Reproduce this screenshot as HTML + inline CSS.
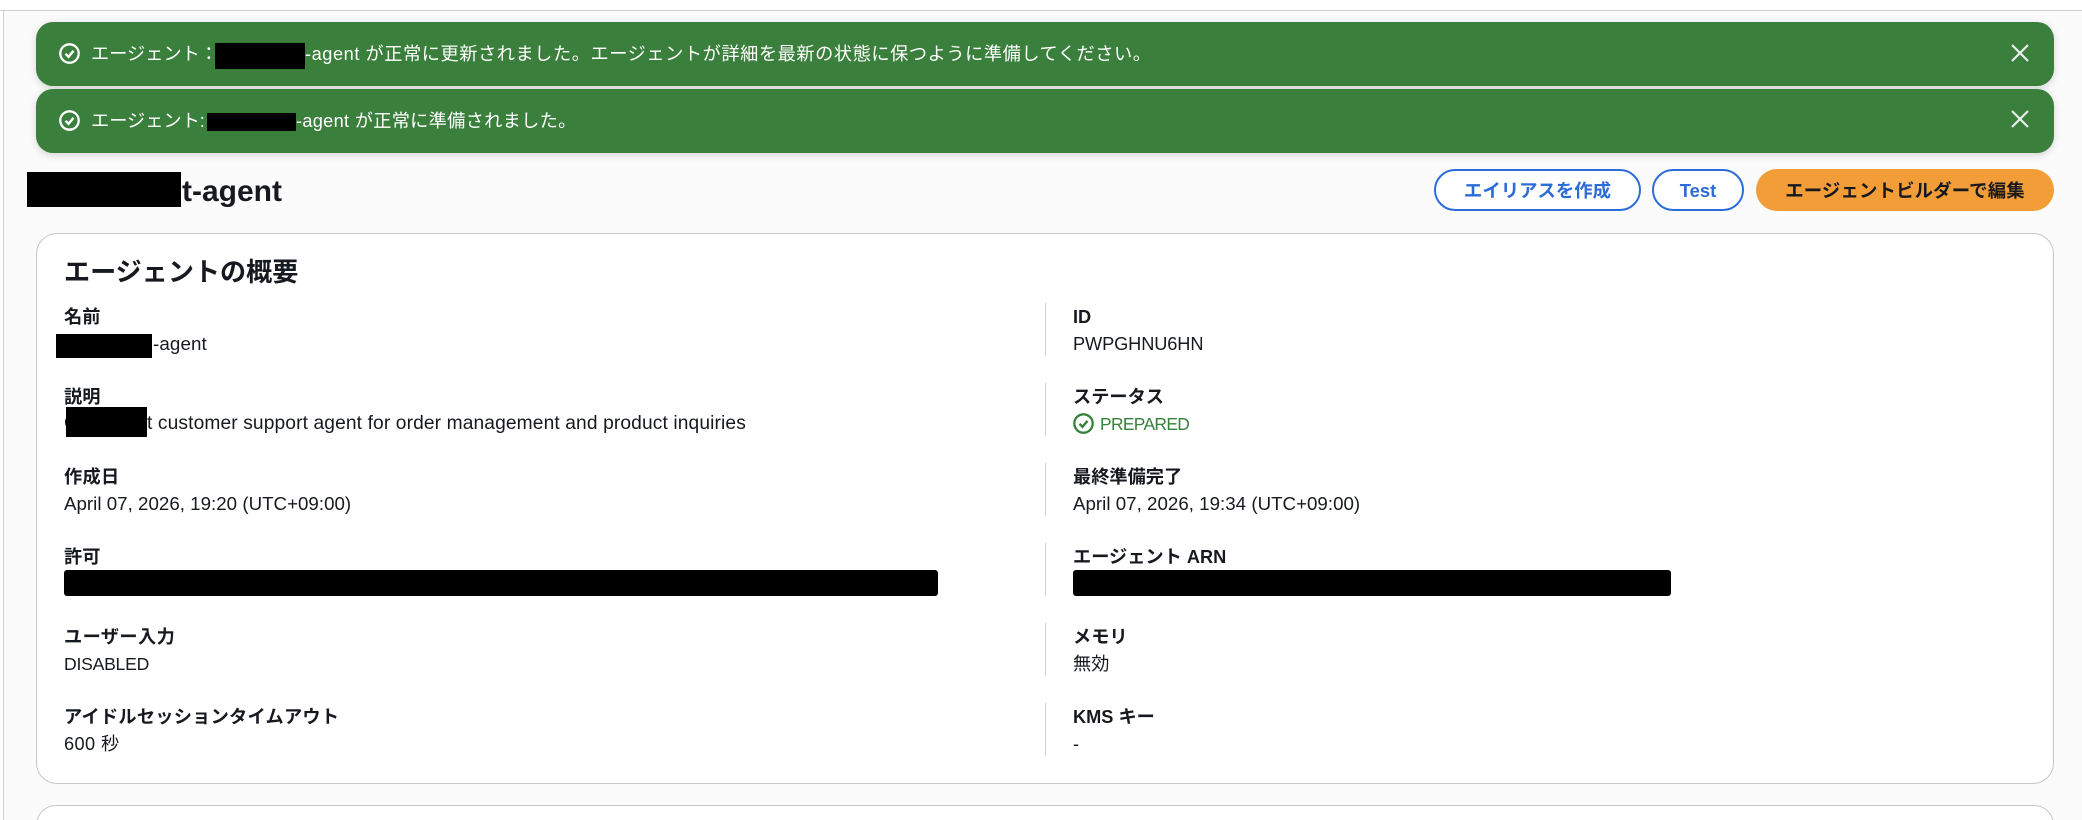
<!DOCTYPE html>
<html lang="ja"><head><meta charset="utf-8"><title>Agent</title>
<style>
html,body{margin:0;padding:0;width:2082px;height:820px;overflow:hidden;background:#fff}
body{position:relative;font-family:"Liberation Sans","Noto Sans CJK JP",sans-serif;color:#16191f}
div,span,h1,h2,svg{position:absolute;margin:0}
.t{white-space:nowrap;line-height:30px;font-size:18.2px;font-weight:400}
.l{font-weight:700}
.k{background:#000}
.fl{left:36px;width:2018px;height:64px;background:#3a7f3c;border-radius:17px;box-shadow:0 2px 8px rgba(0,0,0,.16)}
.w{color:#fff}
.b{box-sizing:border-box;top:169px;height:42px;border-radius:21px;text-align:center;line-height:40px;font-size:18.4px;font-weight:700;white-space:nowrap}
.o{border:2px solid #2c6cd8;background:#fff;color:#2c6cd8}
.d{left:1045px;width:1px;height:53px;background:#d3d3d6}
.card{left:36px;width:2018px;box-sizing:border-box;border:1px solid #c6c6cd;border-radius:21px;background:#fff}
</style></head><body>
<div style="left:0;top:0;width:2082px;height:10px;background:#fff;border-bottom:1px solid #d0d0d0"></div>
<div style="left:3px;top:11px;width:2079px;height:809px;background:#fbfbfb;border-left:1px solid #d0d0d0"></div>

<div class="fl" style="top:22px"></div>
<div class="fl" style="top:89px"></div>

<svg style="left:59px;top:43px" width="21" height="21" viewBox="0 0 21 21" fill="none" stroke="#fff" stroke-width="2.3"><circle cx="10.5" cy="10.5" r="9.2"/><path d="M6.5 10.8l3 3 5-6" stroke-width="2.4"/></svg>
<svg style="left:59px;top:110px" width="21" height="21" viewBox="0 0 21 21" fill="none" stroke="#fff" stroke-width="2.3"><circle cx="10.5" cy="10.5" r="9.2"/><path d="M6.5 10.8l3 3 5-6" stroke-width="2.4"/></svg>

<span class="t w" style="left:91px;top:39px">エージェント：</span>
<span class="k" style="left:215px;top:43px;width:90px;height:26px"></span>
<span class="t w" style="left:305px;top:39px;letter-spacing:.56px">-agent が正常に更新されました。エージェントが詳細を最新の状態に保つように準備してください。</span>
<span class="t w" style="left:91px;top:106px">エージェント:</span>
<span class="k" style="left:207px;top:113px;width:89px;height:18px"></span>
<span class="t w" style="left:296px;top:106px;letter-spacing:.3px">-agent が正常に準備されました。</span>

<svg style="left:2011px;top:44px" width="18" height="18" viewBox="0 0 18 18" stroke="#ececec" stroke-width="2.2"><path d="M1 1l16 16M17 1L1 17"/></svg>
<svg style="left:2011px;top:110px" width="18" height="18" viewBox="0 0 18 18" stroke="#ececec" stroke-width="2.2"><path d="M1 1l16 16M17 1L1 17"/></svg>

<span class="t" style="left:182px;top:172px;font-size:30px;font-weight:700;line-height:40px">t-agent</span>
<span class="k" style="left:27px;top:172px;width:154px;height:35px"></span>

<div class="b o" style="left:1434px;width:207px">エイリアスを作成</div>
<div class="b o" style="left:1652px;width:92px">Test</div>
<div class="b" style="left:1756px;width:298px;background:#f29d38;line-height:44px;letter-spacing:.15px">エージェントビルダーで編集</div>

<div class="card" style="top:233px;height:551px"></div>
<div class="card" style="top:805px;height:40px"></div>

<h2 class="t" style="left:64px;top:257px;font-size:26.1px;font-weight:700">エージェントの概要</h2>

<span class="t l" style="left:64px;top:302px">名前</span>
<span class="t" style="left:153px;top:329px;letter-spacing:.1px;font-size:18.8px">-agent</span>
<span class="k" style="left:56px;top:334px;width:96px;height:24px"></span>

<span class="t l" style="left:64px;top:382px">説明</span>
<span class="t" style="left:64px;top:409px;font-size:19.2px">C</span>
<span class="t" style="left:147px;top:409px;font-size:19.2px;letter-spacing:.12px">t customer support agent for order management and product inquiries</span>
<span class="k" style="left:66px;top:407px;width:81px;height:30px"></span>

<span class="t l" style="left:64px;top:462px;letter-spacing:.3px">作成日</span>
<span class="t" style="left:64px;top:489px;font-size:18.7px;letter-spacing:.03px">April 07, 2026, 19:20 (UTC+09:00)</span>

<span class="t l" style="left:64px;top:542px">許可</span>
<span class="k" style="left:64px;top:570px;width:874px;height:26px;border-radius:3px"></span>

<span class="t l" style="left:64px;top:622px;letter-spacing:.4px">ユーザー入力</span>
<span class="t" style="left:64px;top:649px;font-size:17.6px;letter-spacing:-.25px">DISABLED</span>

<span class="t l" style="left:64px;top:702px;letter-spacing:.25px">アイドルセッションタイムアウト</span>
<span class="t" style="left:64px;top:729px;letter-spacing:.4px">600 秒</span>

<div class="d" style="top:303px"></div>
<div class="d" style="top:383px"></div>
<div class="d" style="top:463px"></div>
<div class="d" style="top:543px"></div>
<div class="d" style="top:623px"></div>
<div class="d" style="top:703px"></div>

<span class="t l" style="left:1073px;top:302px">ID</span>
<span class="t" style="left:1073px;top:329px;letter-spacing:-.1px">PWPGHNU6HN</span>

<span class="t l" style="left:1073px;top:382px">ステータス</span>
<svg style="left:1073px;top:413px" width="21" height="21" viewBox="0 0 21 21" fill="none" stroke="#37813b" stroke-width="2.3"><circle cx="10.5" cy="10.5" r="9.2"/><path d="M6.5 10.8l3 3 5-6" stroke-width="2.4"/></svg>
<span class="t" style="left:1100px;top:409px;color:#37813b;font-size:17.4px;letter-spacing:-.65px">PREPARED</span>

<span class="t l" style="left:1073px;top:462px">最終準備完了</span>
<span class="t" style="left:1073px;top:489px;font-size:18.7px;letter-spacing:.03px">April 07, 2026, 19:34 (UTC+09:00)</span>

<span class="t l" style="left:1073px;top:542px">エージェント ARN</span>
<span class="k" style="left:1073px;top:570px;width:598px;height:26px;border-radius:3px"></span>

<span class="t l" style="left:1073px;top:622px">メモリ</span>
<span class="t" style="left:1073px;top:649px">無効</span>

<span class="t l" style="left:1073px;top:702px">KMS キー</span>
<span class="t" style="left:1073px;top:729px">-</span>
</body></html>
